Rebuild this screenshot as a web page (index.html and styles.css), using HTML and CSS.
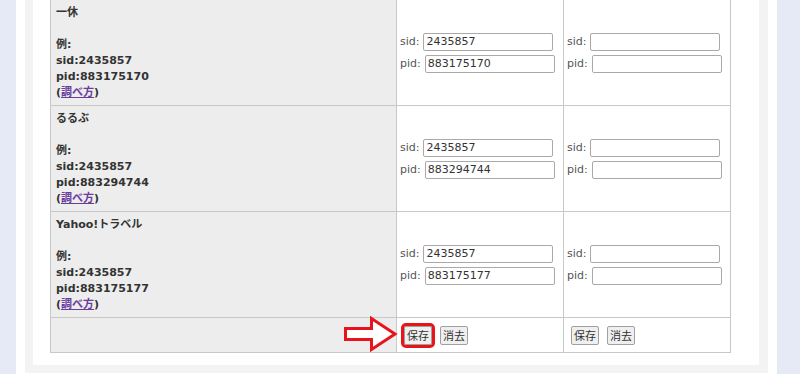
FILE: index.html
```html
<!DOCTYPE html>
<html lang="ja">
<head>
<meta charset="utf-8">
<title>設定</title>
<link rel="stylesheet" href="styles.css">
</head>
<body>
<div class="page">
  <div class="frame">
    <div class="panel">
      <div class="table-wrap">
        <table class="ids">
          <colgroup>
            <col class="c-name">
            <col class="c-set">
            <col class="c-set">
          </colgroup>
          <tr>
            <th class="name">一休<br><br>例:<br>sid:2435857<br>pid:883175170<br>(<a href="#">調べ方</a>)</th>
            <td class="set">
              <div class="field"><label>sid:</label><input type="text" value="2435857"></div>
              <div class="field"><label>pid:</label><input type="text" value="883175170"></div>
            </td>
            <td class="set">
              <div class="field"><label>sid:</label><input type="text" value=""></div>
              <div class="field"><label>pid:</label><input type="text" value=""></div>
            </td>
          </tr>
          <tr>
            <th class="name">るるぶ<br><br>例:<br>sid:2435857<br>pid:883294744<br>(<a href="#">調べ方</a>)</th>
            <td class="set">
              <div class="field"><label>sid:</label><input type="text" value="2435857"></div>
              <div class="field"><label>pid:</label><input type="text" value="883294744"></div>
            </td>
            <td class="set">
              <div class="field"><label>sid:</label><input type="text" value=""></div>
              <div class="field"><label>pid:</label><input type="text" value=""></div>
            </td>
          </tr>
          <tr>
            <th class="name">Yahoo!トラベル<br><br>例:<br>sid:2435857<br>pid:883175177<br>(<a href="#">調べ方</a>)</th>
            <td class="set">
              <div class="field"><label>sid:</label><input type="text" value="2435857"></div>
              <div class="field"><label>pid:</label><input type="text" value="883175177"></div>
            </td>
            <td class="set">
              <div class="field"><label>sid:</label><input type="text" value=""></div>
              <div class="field"><label>pid:</label><input type="text" value=""></div>
            </td>
          </tr>
          <tr class="actions">
            <th class="blank"></th>
            <td class="btns"><button class="btn hl">保存</button><button class="btn">消去</button></td>
            <td class="btns"><button class="btn">保存</button><button class="btn">消去</button></td>
          </tr>
        </table>
        <svg class="arrow" width="58" height="40" viewBox="0 0 58 40">
          <polygon points="3.5,14.5 29.5,14.5 29.5,4.5 53,20 29.5,35.5 29.5,25.5 3.5,25.5" fill="#fff" stroke="#e8141c" stroke-width="3" stroke-linejoin="miter"/>
        </svg>
      </div>
    </div>
  </div>
</div>
</body>
</html>
```

FILE: styles.css
```css
html, body {
  margin: 0;
  padding: 0;
}
body {
  background: #e6eaf6;
  font-family: "DejaVu Sans", Verdana, "Noto Sans CJK JP", sans-serif;
  font-size: 11px;
  color: #333;
  overflow: hidden;
}
.page {
  margin-left: 16px;
  width: 743px;
  padding: 0 9px 20px 9px;
  background: #fff;
  margin-top: -20px;
}
.frame {
  background: #f3f3f3;
  padding: 8px 9px 8px 8px;
}
.panel {
  background: #fff;
  padding: 11px 30px 12px 17px;
}
.table-wrap {
  position: relative;
}
.ids {
  border-collapse: collapse;
  table-layout: fixed;
  width: 680px;
}
.c-name { width: 346px; }
.c-set { width: 167px; }
.ids th, .ids td {
  border: 1px solid #c8c8c8;
}
.name {
  background: #ededed;
  text-align: left;
  vertical-align: top;
  font-weight: bold;
  line-height: 16px;
  padding: 5px 5px 4px 5px;
  color: #333;
}
.blank {
  background: #ededed;
  padding: 0;
}
.name a {
  color: #6a3c9c;
  text-decoration: underline;
}
.set {
  vertical-align: middle;
  padding: 0 3px;
}
.field {
  display: flex;
  align-items: center;
  height: 18px;
}
.field + .field {
  margin-top: 4px;
}
.field label {
  color: #555;
  margin-right: 4px;
}
.field input {
  box-sizing: border-box;
  width: 130px;
  height: 18px;
  border: 1px solid #a9a9a9;
  border-radius: 2px;
  padding: 0 2px;
  font-family: "DejaVu Sans", Verdana, sans-serif;
  font-size: 11px;
  color: #333;
  background: #fff;
}
.actions {
  height: 35px;
}
.btns {
  vertical-align: middle;
  padding: 0 0 0 7px;
  line-height: 18px;
}
.btn {
  box-sizing: border-box;
  height: 19px;
  padding: 0 2px;
  margin: 0 8px 0 0;
  font-family: "Noto Sans CJK JP", sans-serif;
  font-size: 11px;
  line-height: 17px;
  color: #333;
  background: #efefef;
  border: 1px solid #a0a0a0;
  border-radius: 2px;
  vertical-align: middle;
}
.btn.hl {
  outline: 3px solid #e8141c;
  outline-offset: 0;
}
.arrow {
  position: absolute;
  left: 292px;
  top: 315px;
}
```
